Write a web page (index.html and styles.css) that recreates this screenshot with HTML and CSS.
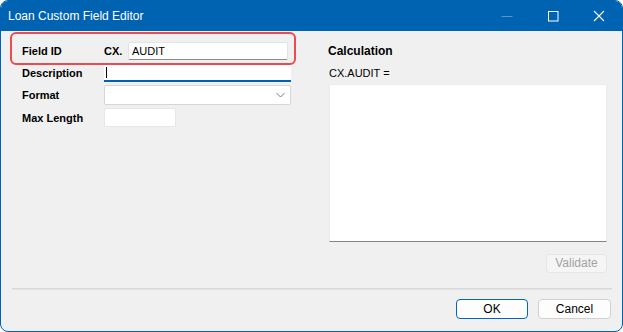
FILE: index.html
```html
<!DOCTYPE html>
<html>
<head>
  <title>Loan Custom Field Editor</title>
  <link rel="stylesheet" href="styles.css">
</head>
<body>
  <div class="window">
    <div class="titlebar">
      <div class="title">Loan Custom Field Editor</div>
      <div class="controls">
        <div class="ctl min">
          <svg width="12" height="12" viewBox="0 0 12 12"><line x1="0.5" y1="6.5" x2="11.5" y2="6.5" stroke="#5b95cc" stroke-width="1"/></svg>
        </div>
        <div class="ctl">
          <svg width="12" height="12" viewBox="0 0 12 12"><rect x="1.5" y="1.5" width="9.5" height="9.5" fill="none" stroke="#fff" stroke-width="1"/></svg>
        </div>
        <div class="ctl">
          <svg width="12" height="12" viewBox="0 0 12 12"><path d="M1 1 L11 11 M11 1 L1 11" stroke="#fff" stroke-width="1.1"/></svg>
        </div>
      </div>
    </div>

    <div class="content">
      <div class="panes">
        <div class="left">
          <div class="idbox">
            <div class="lbl">Field ID</div>
            <div class="prefix">CX.</div>
            <div class="field idfield">AUDIT</div>
          </div>
          <div class="row first">
            <div class="lbl">Description</div>
            <div class="field desc"><span class="caret"></span></div>
          </div>
          <div class="row">
            <div class="lbl">Format</div>
            <div class="field select">
              <svg width="9" height="6" viewBox="0 0 9 6"><path d="M0.5 1 L4.5 5 L8.5 1" fill="none" stroke="#7a7a7a" stroke-width="1"/></svg>
            </div>
          </div>
          <div class="row">
            <div class="lbl">Max Length</div>
            <div class="field maxlen"></div>
          </div>
        </div>

        <div class="right">
          <div class="heading">Calculation</div>
          <div class="expr">CX.AUDIT =</div>
          <div class="calc"></div>
          <div class="validate-row">
            <div class="btn disabled">Validate</div>
          </div>
        </div>
      </div>

      <div class="sep"></div>
      <div class="footer">
        <div class="btn default">OK</div>
        <div class="btn">Cancel</div>
      </div>
    </div>
  </div>
</body>
</html>
```

FILE: styles.css
```css
html, body {
  margin: 0;
  padding: 0;
}
body {
  width: 623px;
  height: 332px;
  background: #ffffff;
  font-family: "Liberation Sans", Arial, sans-serif;
  font-size: 11px;
  color: #000;
}
.window {
  box-sizing: border-box;
  width: 623px;
  height: 332px;
  border: 1px solid #0063b1;
  border-radius: 8px;
  overflow: hidden;
  display: flex;
  flex-direction: column;
  background: #f0f0f0;
}
.titlebar {
  height: 30px;
  background: #0063b1;
  display: flex;
  align-items: center;
  justify-content: space-between;
  flex-shrink: 0;
}
.title {
  color: #fff;
  font-family: "Liberation Sans", Arial, sans-serif;
  font-size: 12px;
  padding-left: 7px;
}
.controls {
  display: flex;
  height: 30px;
}
.ctl {
  width: 46px;
  display: flex;
  align-items: center;
  justify-content: center;
}

.content {
  flex: 1;
  display: flex;
  flex-direction: column;
}
.panes {
  flex: 1;
  display: flex;
}
.left {
  width: 287px;
  padding-left: 9px;
  padding-top: 1px;
}
.right {
  width: 279px;
  margin-left: 31px;
  padding-top: 12px;
}

.lbl {
  font-weight: bold;
  width: 82px;
  flex-shrink: 0;
}
.idbox {
  box-sizing: border-box;
  height: 33px;
  width: 286px;
  border: 2px solid #ea4a50;
  border-radius: 6px;
  display: flex;
  align-items: center;
  padding-left: 10px;
  padding-top: 4px;
}
.prefix {
  font-weight: bold;
  width: 24px;
}
.field {
  box-sizing: border-box;
  background: #fff;
  border: 1px solid #e4e4e4;
  border-bottom-color: #8a8a8a;
  border-radius: 2px;
}
.idfield {
  width: 160px;
  height: 18px;
  line-height: 16px;
  padding-left: 3px;
}
.row {
  display: flex;
  align-items: center;
  padding-left: 12px;
  margin-top: 3px;
}
.row.first {
  margin-top: 0;
}
.row.first .lbl {
  margin-top: -2px;
}
.desc {
  width: 187px;
  height: 17px;
  border: none;
  border-bottom: 2px solid #0061b5;
  border-radius: 0;
  padding: 2px 0 0 2px;
}
.caret {
  display: block;
  width: 1px;
  height: 11px;
  background: #000;
}
.select {
  width: 187px;
  height: 20px;
  border-color: #d6d6d6;
  display: flex;
  align-items: center;
  justify-content: flex-end;
  padding-right: 5px;
}
.maxlen {
  width: 72px;
  height: 19px;
  border-color: #e6e6e6;
  border-bottom-color: #e6e6e6;
}

.heading {
  font-weight: bold;
  font-size: 12px;
  line-height: 14px;
  margin-top: 1px;
}
.expr {
  margin-top: 9px;
  padding-left: 1px;
  line-height: 13px;
}
.calc {
  box-sizing: border-box;
  margin-top: 4px;
  margin-left: 1px;
  width: 278px;
  height: 158px;
  background: #fff;
  border: 1px solid #ececec;
  border-bottom: 1px solid #858585;
}
.validate-row {
  display: flex;
  justify-content: flex-end;
  margin-top: 12px;
}

.btn {
  box-sizing: border-box;
  width: 73px;
  height: 20px;
  line-height: 18px;
  text-align: center;
  font-size: 12px;
  border: 1px solid #d0d0d0;
  border-radius: 4px;
  background: #fdfdfd;
}
.btn.disabled {
  width: 61px;
  height: 19px;
  line-height: 17px;
  color: #a3a3a3;
  background: #f5f5f5;
  border-color: #e6e6e6;
}
.btn.default {
  width: 72px;
  border-color: #0067c0;
}

.sep {
  height: 0;
  margin: 0 10px 0 11px;
  border-top: 1px solid #d9d9d9;
  border-bottom: 1px solid #e2e2e2;
}
.footer {
  display: flex;
  justify-content: flex-end;
  gap: 10px;
  padding: 9px 11px 12px 0;
}
```
